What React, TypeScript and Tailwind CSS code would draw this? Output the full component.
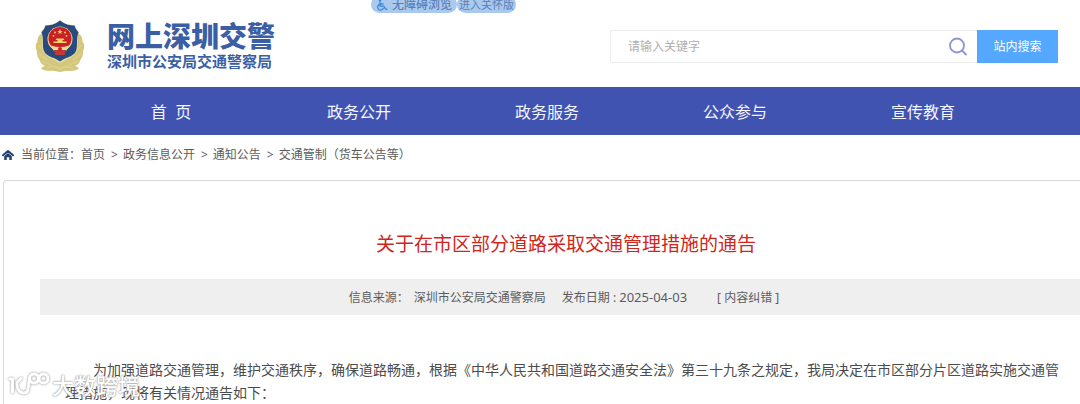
import React from "react";

const navItems = ["首\u00a0\u00a0页", "政务公开", "政务服务", "公众参与", "宣传教育"];
const crumbs = ["首页", "政务信息公开", "通知公告", "交通管制（货车公告等）"];

function Emblem() {
  return (
    <svg viewBox="0 0 50 52" className="h-[52px] w-[50px] shrink-0" aria-hidden="true">
      <path d="M6 14C1 17 4 21 1 24c-1 4 1 6 1 9 0 4 2 5 3 8 1 3 3 4 5 5-3 1-5 2-3 3 4 3 11 1 18 3 7-2 14 0 18-3 2-1 0-2-3-3 2-1 4-2 5-5 1-3 3-4 3-8 0-3 2-5 1-9-3-3 0-7-5-10z" fill="#d3c77e" />
      <path d="M4 25l5 7M4 34l8 6M7 41l9 4M46 25l-5 7M46 34l-8 6M43 41l-9 4M12 48q7-3 13 1 6-4 13-1" fill="none" stroke="#ddd38e" strokeWidth="1.2" />
      <path d="M25 0C19 5 14 5 10 5c-1 4-3 5-4 7 3 7 0 15 3 20 3 6 10 7 16 11 6-4 13-5 16-11 3-5 0-13 3-20-1-2-3-3-4-7-4 0-9 0-15-5z" fill="#e8dfa2" />
      <path d="M25 .5C19 5 15 5.500 10.500 5.500c-1 4-3 5-4 7 3 7 0 14.500 3 19.500 3 5 10.500 5.500 15.500 9.500 5-4 12.500-4.500 15.500-9.500 3-5 0-12.500 3-19.500-1-2-3-3-4-7-4.500 0-8.500-.5-14.500-5z" fill="#294a7e" />
      <circle cx="25" cy="19" r="12.500" fill="#efdc91" />
      <circle cx="25" cy="18.500" r="11.500" fill="#c91f27" />
      <path d="M25 9l.7 1.900h2l-1.600 1.200.6 1.900-1.700-1.100-1.700 1.100.6-1.900-1.600-1.200h2z" fill="#f5d765" />
      <g fill="#f5d765">
        <circle cx="20" cy="12.500" r=".9" />
        <circle cx="30" cy="12.500" r=".9" />
        <circle cx="18.500" cy="15.800" r=".9" />
        <circle cx="31.500" cy="15.800" r=".9" />
        <path d="M21.500 18.500h7l1 1.500h-2v1.500h4V23h-13v-1.500h4V20h-2z" />
      </g>
      <path d="M16 25.500q9 3 18 0l-2.500 5h-13z" fill="#efdc91" />
      <path d="M19 30h12l-1.500 5h-9z" fill="#c33a32" />
      <circle cx="25" cy="29" r="2" fill="#c91f27" />
    </svg>
  );
}

function HomeIcon() {
  return (
    <svg viewBox="0 0 12 12" className="h-3 w-3" aria-hidden="true">
      <path d="M1 6.300L6 2l5 4.300" fill="none" stroke="#243f70" strokeWidth="2" strokeLinecap="round" strokeLinejoin="round" />
      <path d="M2.200 7.200L6 4l3.800 3.200V11H7.300V8.200H4.700V11H2.200z" fill="#243f70" />
    </svg>
  );
}

function AccessIcon() {
  return (
    <svg viewBox="0 0 12 12" className="h-3 w-3" fill="none" stroke="#3b86d8" strokeWidth="1.300" strokeLinecap="round" strokeLinejoin="round" aria-hidden="true">
      <circle cx="4" cy="1.500" r=".6" fill="#3b86d8" />
      <path d="M4 3.200v4h4l1.500 3h1.500M4 5h3M2.700 5.700a3 3 0 1 0 4.600 3.600" />
    </svg>
  );
}

function Watermark() {
  return (
    <div className="pointer-events-none absolute left-2 top-[372px] flex items-center gap-[3px] text-white" aria-hidden="true">
      <svg viewBox="0 0 41 26" className="h-[26px] w-[41px] overflow-visible drop-shadow-[0_0_1px_#888888]" fill="none" stroke="#ffffff" strokeWidth="3" strokeLinecap="round" strokeLinejoin="round">
        <path d="M2 7h2.500v13M13 6.500L9 10.500c-1 5 2 10 6.500 10.500 3 0 4.500-2 4.500-5" />
        <circle cx="26" cy="6.500" r="4.500" />
        <circle cx="35.500" cy="6.500" r="4.500" />
        <path d="M21.500 7l-1 7" />
      </svg>
      <span className="text-[22px] leading-[26px] font-medium [text-shadow:0_0_2px_#888888,0_0_1px_#aaaaaa]">大数跨境</span>
    </div>
  );
}

export default function App() {
  return (
    <div className="relative flex min-h-screen flex-col overflow-hidden bg-white font-['Noto_Sans','Noto_Sans_CJK_SC',sans-serif] text-[#5c5c5c]">
      <div className="absolute -top-1 left-[371px] flex text-[#5a80b6]">
        <button className="flex h-[17px] items-center gap-1 rounded-full bg-[#a9c9ef] px-[5px] text-xs leading-4 font-medium">
          <AccessIcon />
          无障碍浏览
        </button>
        <button className="h-[17px] rounded-full bg-[#a9c9ef] px-[2px] text-[11px] leading-4">进入关怀版</button>
      </div>

      <header className="flex h-[87px] items-center justify-between pr-[22px] pl-[35px]">
        <a href="#" className="flex items-center gap-[22px] pt-1 text-[#3b5fa5]">
          <Emblem />
          <span className="flex flex-col">
            <span className="text-[28px] leading-[30px] font-black">网上深圳交警</span>
            <span className="text-[15px] leading-5 font-bold">深圳市公安局交通警察局</span>
          </span>
        </a>
        <form className="mt-[6px] flex h-[33px] w-[448px]" onSubmit={(e) => e.preventDefault()}>
          <label className="flex min-w-0 flex-1 items-center border border-r-0 border-[#ececec] pr-[9px] pl-[17px]">
            <input type="text" aria-label="站内搜索" placeholder="请输入关键字" className="min-w-0 flex-1 text-xs outline-none placeholder:text-[#b0b0b0]" />
            <svg viewBox="0 0 20 20" className="h-5 w-5" fill="none" stroke="#8d95d6" strokeWidth="1.800" strokeLinecap="round" aria-hidden="true">
              <circle cx="9" cy="8.500" r="7" />
              <path d="M14 13.500l4 4" />
            </svg>
          </label>
          <button className="w-[81px] bg-[#54a8ff] text-xs text-white">站内搜索</button>
        </form>
      </header>

      <nav className="grid h-12 grid-cols-5 bg-[#4153b1] pr-[63px] pl-[77px]">
        {navItems.map((item) => (
          <a key={item} href="#" className="flex items-center justify-center pt-px text-base whitespace-pre text-[#f4f6ff]">
            {item}
          </a>
        ))}
      </nav>

      <div className="flex h-10 items-center gap-[7px] pl-[2px] text-xs">
        <HomeIcon />
        <div className="flex items-center">
          <span>当前位置：</span>
          {crumbs.map((crumb, i) => (
            <React.Fragment key={crumb}>
              {i > 0 && <span className="pr-[5px] pl-[6px]">&gt;</span>}
              <a href="#">{crumb}</a>
            </React.Fragment>
          ))}
        </div>
      </div>

      <main className="mt-[5px] ml-[3px] flex-1 rounded-tl-sm border-t border-l border-[#d9d9d9]">
        <h1 className="pt-[49px] pl-12 text-center text-[19px] leading-7 text-[#d0261c]">关于在市区部分道路采取交通管理措施的通告</h1>
        <div className="mt-[21px] ml-9 flex h-9 items-center justify-center bg-[#efefef] pt-px pl-2 text-xs">
          <span>信息来源：</span>
          <span className="ml-[5px]">深圳市公安局交通警察局</span>
          <span className="ml-4">
            发布日期 : <time className="text-[13px]">2025-04-03</time>
          </span>
          <a href="#" className="ml-[30px]">[ 内容纠错 ]</a>
        </div>
        <p className="mt-[43px] pr-[14px] pl-[61px] indent-[28px] text-sm leading-[23px] text-[#4c4c4c]">
          为加强道路交通管理，维护交通秩序，确保道路畅通，根据《中华人民共和国道路交通安全法》第三十九条之规定，我局决定在市区部分片区道路实施交通管理措施，现将有关情况通告如下：
        </p>
      </main>
      <Watermark />
    </div>
  );
}
